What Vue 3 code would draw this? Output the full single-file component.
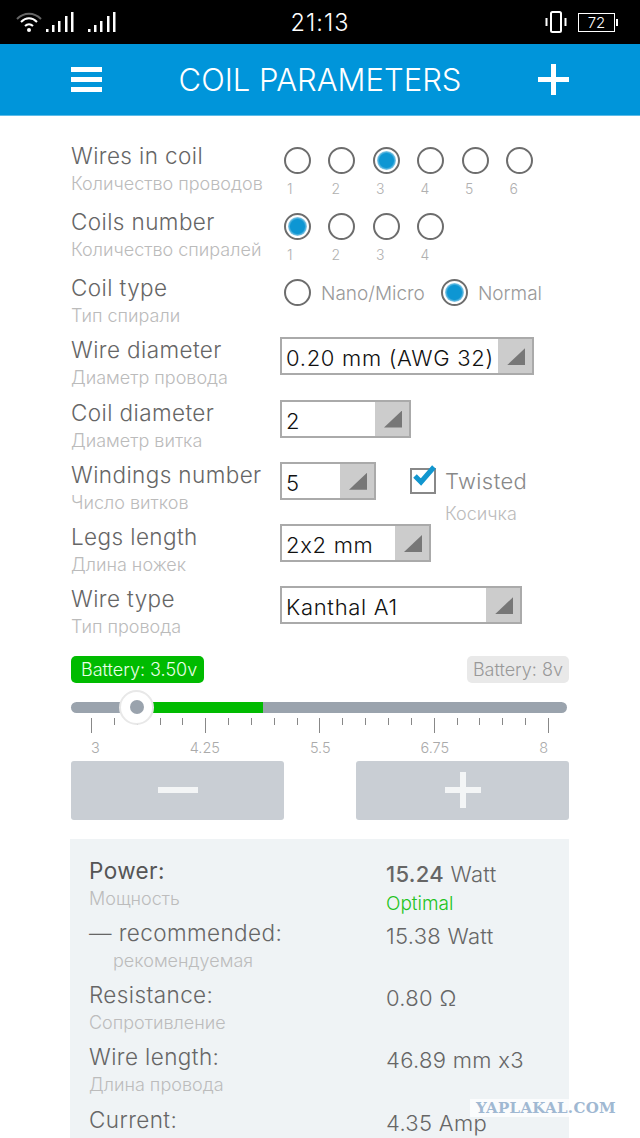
<script setup>
const wires = [1, 2, 3, 4, 5, 6]
const coils = [1, 2, 3, 4]

const selects = [
  { label: 'Wire diameter', sub: 'Диаметр провода', value: '0.20 mm (AWG 32)', width: 254 },
  { label: 'Coil diameter', sub: 'Диаметр витка', value: '2', width: 131 },
  { label: 'Windings number', sub: 'Число витков', value: '5', width: 96, twisted: true },
  { label: 'Legs length', sub: 'Длина ножек', value: '2x2 mm', width: 151 },
  { label: 'Wire type', sub: 'Тип провода', value: 'Kanthal A1', width: 242 },
]

const ticks = Array.from({ length: 21 }, (_, i) => i)
const scale = ['3', '4.25', '5.5', '6.75', '8']

const results = [
  { label: 'Power:', sub: 'Мощность', strong: true, bold: '15.24', value: ' Watt', note: 'Optimal' },
  { label: '— recommended:', sub: 'рекомендуемая', indent: true, value: '15.38 Watt' },
  { label: 'Resistance:', sub: 'Сопротивление', value: '0.80 Ω' },
  { label: 'Wire length:', sub: 'Длина провода', value: '46.89 mm x3' },
  { label: 'Current:', value: '4.35 Amp' },
]
</script>

<template>
  <div class="screen">
    <!-- status bar -->
    <div class="status">
      <div class="status-left">
        <svg width="26" height="22" viewBox="0 0 26 22" fill="none">
          <path d="M1 8 C8 1 18 1 25 8" stroke="#666" stroke-width="2" />
          <path d="M5 11 C10 6 16 6 21 11" stroke="#fff" stroke-width="2" />
          <path d="M9 15 C11.500 12.500 14.500 12.500 17 15" stroke="#fff" stroke-width="2" />
          <circle cx="13" cy="19" r="2" fill="#fff" />
        </svg>
        <svg class="bars" width="30" height="20" viewBox="0 0 30 20" fill="#fff">
          <rect x="1" y="17" width="2.500" height="3" />
          <rect x="7" y="13" width="2.500" height="7" />
          <rect x="13" y="9" width="2.500" height="11" />
          <rect x="20" y="4" width="2.500" height="16" />
          <rect x="26" y="0" width="2.500" height="20" />
        </svg>
        <svg class="bars second" width="30" height="20" viewBox="0 0 30 20" fill="#fff">
          <rect x="1" y="17" width="2.500" height="3" />
          <rect x="7" y="13" width="2.500" height="7" />
          <rect x="13" y="9" width="2.500" height="11" />
          <rect x="20" y="4" width="2.500" height="16" />
          <rect x="26" y="0" width="2.500" height="20" />
        </svg>
      </div>
      <div class="clock">21:13</div>
      <div class="status-right">
        <svg width="22" height="22" viewBox="0 0 22 22" fill="none" stroke="#fff">
          <rect x="6" y="1" width="10" height="20" rx="1.500" stroke-width="2" />
          <path d="M1.500 7V15M20.500 7V15" stroke-width="2" />
        </svg>
        <div class="battery"><span>72</span></div>
      </div>
    </div>

    <!-- toolbar -->
    <div class="toolbar">
      <div class="burger"><i></i><i></i><i></i></div>
      <div class="title">COIL PARAMETERS</div>
      <div class="toolbar-plus"></div>
    </div>

    <div class="form">
      <div class="row tall">
        <div class="names">
          <div class="label">Wires in coil</div>
          <div class="sub">Количество проводов</div>
        </div>
        <div class="radios">
          <div v-for="n in wires" :key="n" class="radio-col">
            <span class="radio" :class="{ on: n === 3 }"></span>
            <span class="num">{{ n }}</span>
          </div>
        </div>
      </div>

      <div class="row tall">
        <div class="names">
          <div class="label">Coils number</div>
          <div class="sub">Количество спиралей</div>
        </div>
        <div class="radios">
          <div v-for="n in coils" :key="n" class="radio-col">
            <span class="radio" :class="{ on: n === 1 }"></span>
            <span class="num">{{ n }}</span>
          </div>
        </div>
      </div>

      <div class="row">
        <div class="names">
          <div class="label">Coil type</div>
          <div class="sub">Тип спирали</div>
        </div>
        <div class="radios types">
          <span class="radio"></span>
          <span class="type-text">Nano/Micro</span>
          <span class="radio on"></span>
          <span class="type-text">Normal</span>
        </div>
      </div>

      <div v-for="s in selects" :key="s.label" class="row">
        <div class="names">
          <div class="label">{{ s.label }}</div>
          <div class="sub">{{ s.sub }}</div>
        </div>
        <div class="select" :style="{ width: s.width + 'px' }">
          <span class="select-value">{{ s.value }}</span>
          <span class="select-arrow"></span>
        </div>
        <div v-if="s.twisted" class="twisted">
          <div class="twisted-top">
            <span class="check">
              <svg width="30" height="28" viewBox="0 0 30 28" fill="none">
                <path d="M6 12 L12 18 L25 3" stroke="#1196cf" stroke-width="5" />
              </svg>
            </span>
            <span class="twisted-label">Twisted</span>
          </div>
          <div class="twisted-sub">Косичка</div>
        </div>
      </div>
    </div>

    <!-- battery slider -->
    <div class="slider">
      <div class="pills">
        <span class="pill green">Battery: 3.50v</span>
        <span class="pill grey">Battery: 8v</span>
      </div>
      <div class="track">
        <div class="track-fill"></div>
        <div class="thumb"><i></i></div>
      </div>
      <div class="ticks">
        <i v-for="t in ticks" :key="t" :class="{ major: t % 5 === 0 }"></i>
      </div>
      <div class="scale">
        <span v-for="v in scale" :key="v">{{ v }}</span>
      </div>
      <div class="steppers">
        <div class="stepper"><span class="minus"></span></div>
        <div class="stepper"><span class="plus"></span></div>
      </div>
    </div>

    <!-- results -->
    <div class="panel">
      <div v-for="r in results" :key="r.label" class="result">
        <div class="names">
          <div class="label" :class="{ strong: r.strong }">{{ r.label }}</div>
          <div v-if="r.sub" class="sub" :class="{ indented: r.indent }">{{ r.sub }}</div>
        </div>
        <div class="result-value">
          <div class="value"><b v-if="r.bold">{{ r.bold }}</b>{{ r.value }}</div>
          <div v-if="r.note" class="note">{{ r.note }}</div>
        </div>
      </div>
    </div>

    <div class="watermark">YAPLAKAL.COM</div>
  </div>
</template>

<style>
body {
  margin: 0;
  background: #fff;
}
</style>

<style scoped>
.screen {
  position: relative;
  width: 640px;
  height: 1138px;
  overflow: hidden;
  background: #fff;
  font-family: Inter, "Open Sans", sans-serif;
  font-weight: 300;
  font-feature-settings: "calt" 0;
  color: #555;
}

.status {
  display: flex;
  align-items: center;
  justify-content: space-between;
  height: 44px;
  padding: 0 25px 0 16px;
  box-sizing: border-box;
  background: #000;
  color: #fff;
}
.status-left {
  display: flex;
  align-items: center;
  width: 209px;
}
.bars {
  margin-left: 3px;
}
.bars.second {
  margin-left: 12px;
}
.clock {
  font-size: 23.500px;
  letter-spacing: 1px;
}
.status-right {
  display: flex;
  align-items: center;
  justify-content: flex-end;
  gap: 11px;
  width: 200px;
}
.battery {
  position: relative;
  width: 35px;
  height: 17px;
  border: 1px solid #fff;
  font-size: 15px;
  line-height: 17px;
  text-align: center;
}
.battery::after {
  content: "";
  position: absolute;
  right: -4px;
  top: 5px;
  width: 2px;
  height: 7px;
  background: #fff;
}

.toolbar {
  display: flex;
  align-items: center;
  justify-content: space-between;
  height: 72px;
  padding: 0 71px;
  box-sizing: border-box;
  background: #0095da;
  border-bottom: 1px solid #5cbbe8;
}
.burger {
  display: flex;
  flex-direction: column;
  gap: 5px;
  width: 31px;
}
.burger i {
  height: 5px;
  background: #fff;
}
.title {
  font-size: 31px;
  color: #fff;
}
.toolbar-plus {
  position: relative;
  width: 31px;
  height: 31px;
  background:
    linear-gradient(#fff, #fff) center / 100% 5px no-repeat,
    linear-gradient(#fff, #fff) center / 5px 100% no-repeat;
}

.form {
  padding: 26px 0 0 71px;
}
.row {
  display: flex;
  height: 62.250px;
}
.row.tall {
  height: 66px;
}
.names {
  width: 209px;
  flex-shrink: 0;
}
.label {
  font-size: 22.500px;
  line-height: 28px;
  letter-spacing: 0.4px;
  color: #666;
  white-space: nowrap;
}
.sub {
  margin-top: 2px;
  font-size: 18px;
  line-height: 24px;
  color: #bbb;
  white-space: nowrap;
}

.radios {
  display: flex;
  gap: 17.300px;
  padding: 5px 0 0 4px;
}
.radio-col {
  display: flex;
  flex-direction: column;
  width: 27.200px;
}
.radio {
  position: relative;
  flex-shrink: 0;
  width: 27px;
  height: 27px;
  box-sizing: border-box;
  border: 2px solid #6d6d6d;
  border-radius: 50%;
  background: #fff;
}
.radio.on::after {
  content: "";
  position: absolute;
  inset: 2px;
  border-radius: 50%;
  background: radial-gradient(circle, #0d96d3 0, #0d96d3 52%, #a9d6ea 74%, #eef7fb 100%);
}
.num {
  margin-top: 6px;
  padding-left: 3px;
  font-size: 14px;
  line-height: 18px;
  color: #b0b0b0;
}
.types {
  gap: 0;
  align-items: flex-start;
}
.type-text {
  margin: 3px 16px 0 10px;
  font-size: 19px;
  line-height: 24px;
  color: #999;
  white-space: nowrap;
}

.select {
  display: flex;
  align-items: stretch;
  justify-content: space-between;
  height: 38px;
  margin-top: 1px;
  box-sizing: border-box;
  border: 2px solid #aaa;
  background: #fff;
}
.select-value {
  padding: 3px 0 0 4px;
  font-size: 22px;
  line-height: 32px;
  letter-spacing: 0.7px;
  color: #111;
  white-space: nowrap;
}
.select-arrow {
  position: relative;
  flex-shrink: 0;
  width: 34px;
  background: #ccc;
}
.select-arrow::after {
  content: "";
  position: absolute;
  right: 7px;
  bottom: 8px;
  width: 18px;
  height: 17px;
  background: #777;
  clip-path: polygon(100% 0, 100% 100%, 0 100%);
}

.twisted {
  margin-left: 34px;
}
.twisted-top {
  display: flex;
  align-items: center;
  gap: 9px;
  padding-top: 6px;
}
.check {
  position: relative;
  width: 26px;
  height: 26px;
  box-sizing: border-box;
  border: 2px solid #888;
}
.check svg {
  position: absolute;
  left: -3px;
  top: -6px;
}
.twisted-label {
  font-size: 22px;
  line-height: 28px;
  letter-spacing: 0.4px;
  color: #888;
}
.twisted-sub {
  margin: 7px 0 0 35px;
  font-size: 18px;
  line-height: 24px;
  color: #bbb;
}

.slider {
  width: 498px;
  margin: 8px 0 0 71px;
}
.pills {
  display: flex;
  justify-content: space-between;
}
.pill {
  height: 27px;
  padding: 0 7px 0 10px;
  border-radius: 5px;
  font-size: 18px;
  line-height: 27px;
}
.pill.green {
  background: #00bb00;
  color: #e8ffe8;
}
.pill.grey {
  padding: 0 6px;
  background: #e9e9e9;
  color: #999;
}
.track {
  position: relative;
  width: 496px;
  height: 11px;
  margin-top: 19px;
  border-radius: 6px;
  background: #9aa3ad;
}
.track-fill {
  position: absolute;
  left: 80px;
  top: 0;
  width: 112px;
  height: 11px;
  background: #00bb00;
}
.thumb {
  position: absolute;
  left: 48px;
  top: -12px;
  display: flex;
  align-items: center;
  justify-content: center;
  width: 35px;
  height: 35px;
  box-sizing: border-box;
  border: 2px solid #e8e8e8;
  border-radius: 50%;
  background: #fff;
}
.thumb i {
  width: 14px;
  height: 14px;
  border-radius: 50%;
  background: #9aa3ad;
}
.ticks {
  display: flex;
  justify-content: space-between;
  width: 458px;
  margin: 5px 0 0 20px;
}
.ticks i {
  width: 1px;
  height: 7px;
  background: #888;
}
.ticks i.major {
  height: 15px;
}
.scale {
  display: flex;
  justify-content: space-between;
  width: 457px;
  margin: 6px 0 0 20px;
  font-size: 14.500px;
  line-height: 18px;
  color: #aaa;
}
.steppers {
  display: flex;
  justify-content: space-between;
  margin-top: 4px;
}
.stepper {
  display: flex;
  align-items: center;
  justify-content: center;
  width: 213px;
  height: 59px;
  border-radius: 3px;
  background: #c9ced4;
}
.minus {
  width: 40px;
  height: 6px;
  background: #f3f5f6;
}
.plus {
  width: 36px;
  height: 36px;
  background:
    linear-gradient(#f3f5f6, #f3f5f6) center / 100% 6px no-repeat,
    linear-gradient(#f3f5f6, #f3f5f6) center / 6px 100% no-repeat;
}

.panel {
  width: 499px;
  height: 299px;
  margin: 19px 0 0 70px;
  padding: 18px 0 0 19px;
  box-sizing: border-box;
  background: #eff3f5;
}
.result {
  display: flex;
  height: 62.300px;
}
.result .names {
  width: 297px;
}
.result .sub {
  color: #bcbcbc;
}
.sub.indented {
  padding-left: 24px;
}
.label.strong {
  font-weight: 400;
  color: #555;
}
.result-value {
  padding-top: 3px;
}
.value {
  font-size: 22px;
  line-height: 28px;
  letter-spacing: 0.3px;
  color: #666;
  white-space: nowrap;
}
.value b {
  font-weight: 500;
}
.note {
  margin-top: 4px;
  font-size: 19px;
  line-height: 24px;
  color: #22c322;
}

.watermark {
  position: absolute;
  left: 470px;
  top: 1099px;
  padding: 0 26px 0 6px;
  background: rgba(255, 255, 255, 0.75);
  font-family: "DejaVu Serif", serif;
  font-size: 15px;
  font-weight: 700;
  line-height: 18px;
  letter-spacing: 0.3px;
  color: #a0b8d2;
}
</style>
